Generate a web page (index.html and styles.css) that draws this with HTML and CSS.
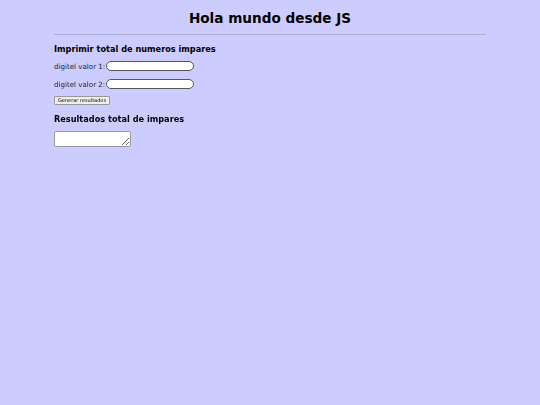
FILE: index.html
```html
<!DOCTYPE html>
<html lang="es">
<head>
<meta charset="utf-8">
<title>Hola mundo desde JS</title>
<link rel="stylesheet" href="styles.css">
</head>
<body>
<div class="page">
  <h1 class="title">Hola mundo desde JS</h1>
  <hr class="rule">
  <h2 class="section">Imprimir total de numeros impares</h2>
  <div class="row"><label class="label">digitel valor 1:</label><input class="field" type="text"></div>
  <div class="row"><label class="label">digitel valor 2:</label><input class="field" type="text"></div>
  <button class="btn" type="button">Generar resultados</button>
  <h2 class="section section-result">Resultados total de impares</h2>
  <textarea class="out"></textarea>
</div>
</body>
</html>
```
FILE: styles.css
```css
html, body {
  margin: 0;
  padding: 0;
  background: #ccccff;
}
body {
  font-family: "DejaVu Sans", Verdana, sans-serif;
  color: #000;
}
.page {
  width: 432px;
  margin: 0 auto;
  padding-top: 9px;
}
.title {
  margin: 0;
  text-align: center;
  font-size: 13.6px;
  font-weight: bold;
  line-height: 18px;
}
.rule {
  margin: 7px 0 0 0;
  border: 0;
  border-top: 1px solid #aeaed2;
  height: 0;
}
.section {
  margin: 8px 0 0 0;
  font-size: 8.2px;
  font-weight: bold;
  line-height: 12px;
}
.row {
  display: flex;
  align-items: center;
  margin-top: 5px;
  height: 12px;
}
.row + .row {
  margin-top: 6px;
}
.label {
  font-size: 7.1px;
  color: #222;
  margin-right: 1px;
}
.field {
  width: 86px;
  height: 8px;
  padding: 0;
  border: 1px solid #555;
  border-radius: 5px;
  background: #fff;
}
.btn {
  display: block;
  margin-top: 6px;
  height: 9px;
  padding: 0 3px;
  font-family: "DejaVu Sans", Verdana, sans-serif;
  font-size: 5px;
  line-height: 7px;
  background: #efefef;
  border: 1px solid #999;
  border-radius: 1px;
}
.section-result {
  margin-top: 8px;
}
.out {
  display: block;
  margin-top: 6px;
  width: 75px;
  height: 14px;
  padding: 0;
  border: 1px solid #999;
  border-radius: 2px;
  background: #fff;
  resize: both;
}
```
